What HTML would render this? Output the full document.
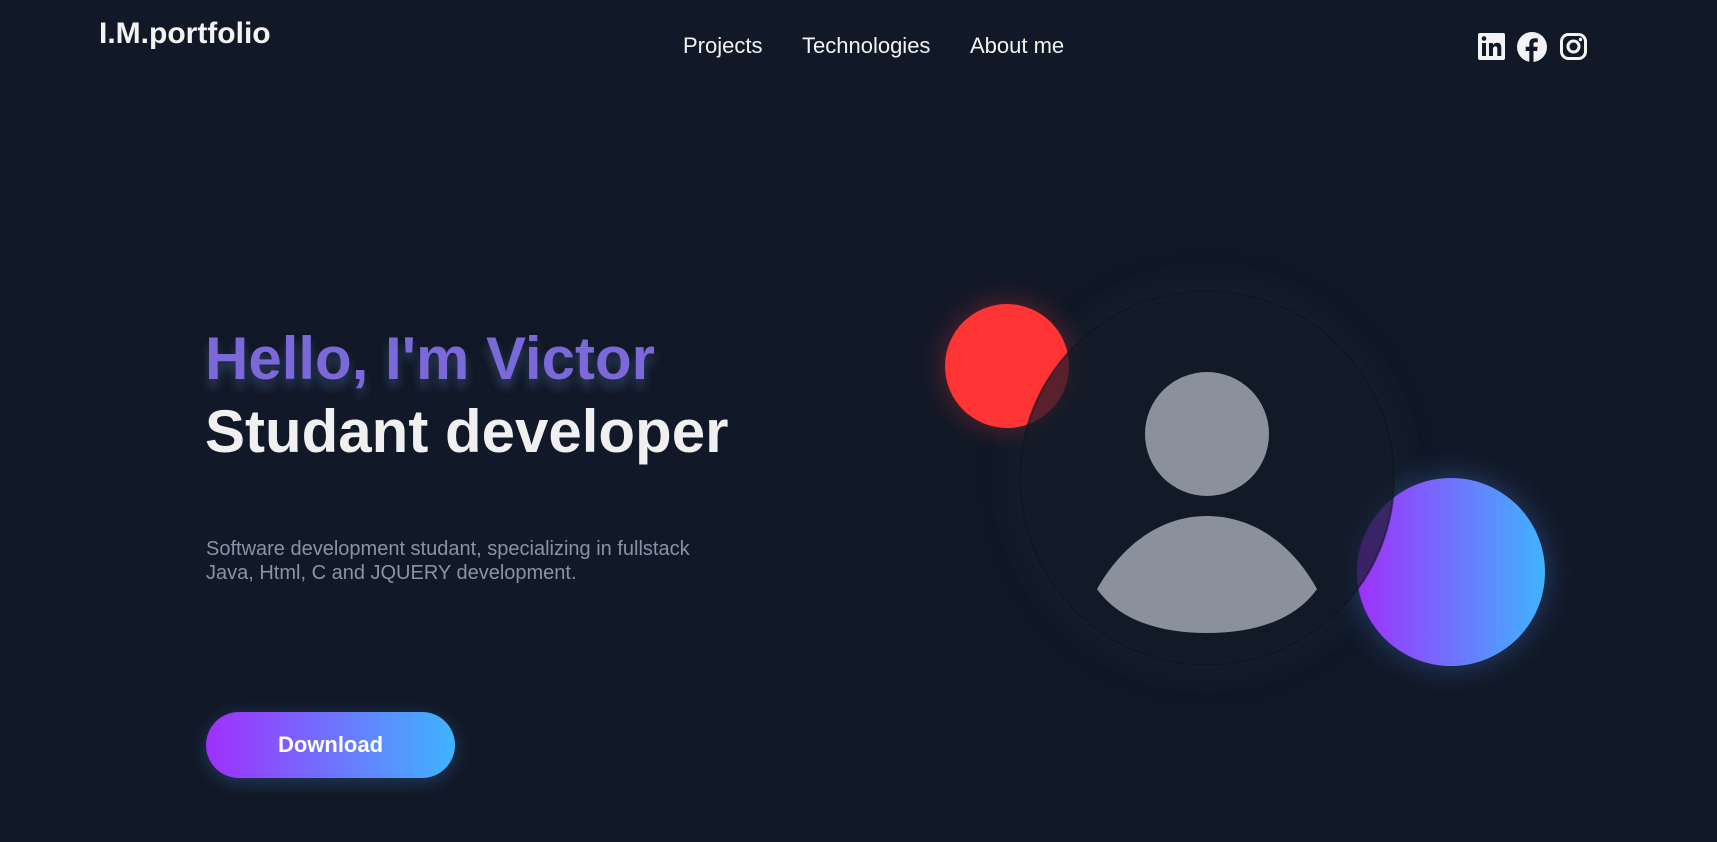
<!DOCTYPE html>
<html><head><meta charset="utf-8"><style>
html,body{margin:0;padding:0;}
body{width:1717px;height:842px;background:#111827;overflow:hidden;position:relative;font-family:"Liberation Sans",Arial,sans-serif;}
.logo{position:absolute;left:99px;top:17px;font-size:30px;font-weight:bold;color:#f3f3f3;}
.nav{position:absolute;top:33px;font-size:22px;color:#f3f3f3;}
h1{position:absolute;left:205px;top:322px;margin:0;font-size:60px;line-height:73px;font-weight:bold;}
.h{color:#7b68d9;text-shadow:0 8px 10px rgba(80,110,160,0.45);}
.s{color:#f0f0f0;}
p{position:absolute;left:206px;top:537px;margin:0;font-size:20px;line-height:24px;color:#8a93a6;}
.btn{position:absolute;left:206px;top:712px;width:249px;height:66px;border-radius:33px;background:linear-gradient(90deg,#a030fc,#3fb4fe);color:#fff;font-weight:bold;font-size:22px;line-height:66px;text-align:center;box-shadow:0 4px 18px rgba(80,140,230,0.3);}
svg.art{position:absolute;left:0;top:0;}
</style></head><body>
<div class="logo">I.M.portfolio</div>
<div class="nav" style="left:683px">Projects</div>
<div class="nav" style="left:802px">Technologies</div>
<div class="nav" style="left:970px">About me</div>

<svg style="position:absolute;left:1478px;top:33px" width="27" height="27" viewBox="0 0 27 27"><rect width="27" height="27" rx="2" fill="#f3f3f3"/><rect x="4" y="10" width="4" height="13" fill="#111827"/><circle cx="6" cy="5.5" r="2.3" fill="#111827"/><path d="M11 10h4v2c1-1.6 2.5-2.3 4.3-2.3 3 0 4 2 4 5V23h-4v-7c0-1.7-.6-2.6-1.9-2.6-1.4 0-2.4 1-2.4 2.8V23h-4z" fill="#111827"/></svg>
<svg style="position:absolute;left:1517px;top:32px" width="30" height="30" viewBox="0 0 30 30"><circle cx="15" cy="15" r="15" fill="#f3f3f3"/><path d="M16.5 30V19h3.6l.6-4.2h-4.2v-2.6c0-1.200.4-2 2.1-2h2.2V6.5c-.4 0-1.7-.2-3.2-.2-3.2 0-5.3 1.9-5.3 5.4v3.1H8.7V19h3.6v11z" fill="#111827"/></svg>
<svg style="position:absolute;left:1560px;top:33px" width="27" height="27" viewBox="0 0 27 27"><rect x="1.5" y="1.5" width="24" height="24" rx="7" fill="none" stroke="#f3f3f3" stroke-width="3"/><circle cx="13.5" cy="13.5" r="5.5" fill="none" stroke="#f3f3f3" stroke-width="3"/><circle cx="20.5" cy="6.5" r="1.7" fill="#f3f3f3"/></svg>

<h1><span class="h">Hello, I'm Victor</span><br><span class="s">Studant developer</span></h1>
<p>Software development studant, specializing in fullstack<br>Java, Html, C and JQUERY development.</p>
<div class="btn">Download</div>

<svg class="art" width="1717" height="842" viewBox="0 0 1717 842">
<defs>
<filter id="blur" x="-50%" y="-50%" width="200%" height="200%"><feGaussianBlur stdDeviation="14"/></filter>
<linearGradient id="g" x1="0" y1="0" x2="1" y2="0"><stop offset="0" stop-color="#a030fc"/><stop offset="1" stop-color="#3fb4fe"/></linearGradient>
<clipPath id="cc"><circle cx="1207" cy="478" r="187"/></clipPath>
</defs>
<circle cx="1207" cy="478" r="200" fill="#17202f" opacity="0.5" filter="url(#blur)"/>
<circle cx="1007" cy="366" r="62" fill="#ff3434" opacity="0.35" filter="url(#blur)"/>
<circle cx="1007" cy="366" r="62" fill="#ff3434"/>
<circle cx="1451" cy="572" r="96" fill="#4a7fe0" opacity="0.35" filter="url(#blur)"/>
<circle cx="1451" cy="572" r="94" fill="url(#g)"/>
<circle cx="1207" cy="478" r="187" fill="#121a28" fill-opacity="0.7" stroke="#0f1520" stroke-opacity="0.6" stroke-width="2"/>
<g clip-path="url(#cc)">
<circle cx="1207" cy="434" r="62" fill="#8b919c"/>
<path d="M1097 589 C1125 540 1165 516 1207 516 C1249 516 1290 540 1317 589 C1295 620 1255 633 1207 633 C1159 633 1119 620 1097 589Z" fill="#8b919c"/>
</g>
</svg>
</body></html>
